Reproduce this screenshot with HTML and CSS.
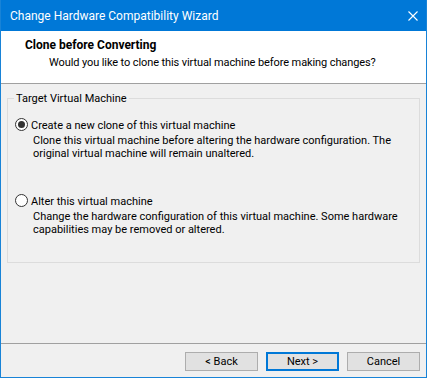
FILE: index.html
```html
<!DOCTYPE html>
<html lang="en">
<head>
    <meta charset="UTF-8">
    <meta name="viewport" content="width=device-width, initial-scale=1.0">
    <title>Change Hardware Compatibility Wizard</title>
    <link rel="stylesheet" href="styles.css">
</head>
<body>

    <div class="window">

        <!-- Title bar -->
        <div class="titlebar">
            <span class="title">Change Hardware Compatibility Wizard</span>
            <svg class="close" width="10" height="10" viewBox="0 0 10 10">
                <path d="M0.5 0.5L9.5 9.5M9.5 0.5L0.5 9.5" stroke="#fff" stroke-width="1.1" fill="none"/>
            </svg>
        </div>

        <!-- Page header -->
        <div class="header">
            <h1>Clone before Converting</h1>
            <p>Would you like to clone this virtual machine before making changes?</p>
        </div>

        <!-- Options -->
        <div class="content">
            <fieldset class="group">
                <legend>Target Virtual Machine</legend>

                <label class="option">
                    <span class="radio checked"></span>
                    <span class="option-text">
                        <span class="option-title">Create a new clone of this virtual machine</span>
                        <span class="option-desc">Clone this virtual machine before altering the hardware configuration. The<br>original virtual machine will remain unaltered.</span>
                    </span>
                </label>

                <label class="option">
                    <span class="radio"></span>
                    <span class="option-text">
                        <span class="option-title">Alter this virtual machine</span>
                        <span class="option-desc">Change the hardware configuration of this virtual machine. Some hardware<br>capabilities may be removed or altered.</span>
                    </span>
                </label>
            </fieldset>
        </div>

        <!-- Buttons -->
        <div class="footer">
            <button>&lt; Back</button>
            <button class="default">Next &gt;</button>
            <button>Cancel</button>
        </div>

    </div>

</body>
</html>
```

FILE: styles.css
```css
/* General reset */
* {
    margin: 0;
    padding: 0;
    box-sizing: border-box;
}

body {
    background-color: #ffffff;
    font-family: Roboto, "Noto Sans", sans-serif;
    font-size: 11px;
    line-height: 13px;
    color: #000;
}

/* Window frame */
.window {
    display: flex;
    flex-direction: column;
    width: 427px;
    height: 378px;
    border: 1px solid #1883d7;
    border-top: none;
    background-color: #f0f0f0;
}

/* Title bar */
.titlebar {
    display: flex;
    align-items: center;
    justify-content: space-between;
    height: 31px;
    padding: 0 8px 0 9px;
    background-color: #0078d7;
    color: #fff;
}

.titlebar .title {
    font-size: 12px;
    line-height: 30px;
    padding-top: 1px;
}

.titlebar .close {
    display: block;
}

/* Header */
.header {
    height: 53px;
    padding: 8px 0 0 24px;
    background-color: #fff;
    border-bottom: 1px solid #a0a0a0;
}

.header h1 {
    font-size: 12px;
    font-weight: bold;
}

.header p {
    margin-top: 4px;
    padding-left: 24px;
    letter-spacing: -0.1px;
}

/* Group box */
.content {
    flex: 1;
    padding: 7px 6px 0;
}

.group {
    display: flex;
    flex-direction: column;
    gap: 34px;
    padding: 12px 6px 26px;
    border: 1px solid #dcdcdc;
}

.group legend {
    padding: 1px 2px 0;
    line-height: 14px;
}

/* Radio options */
.option {
    display: flex;
    align-items: flex-start;
}

.radio {
    flex: none;
    position: relative;
    width: 13px;
    height: 13px;
    margin: 0 3px 0 1px;
    border: 1px solid #333;
    border-radius: 50%;
    background-color: #fff;
}

.radio.checked::after {
    content: "";
    position: absolute;
    top: 2px;
    left: 2px;
    width: 7px;
    height: 7px;
    border-radius: 50%;
    background-color: #333;
}

.option-text {
    display: flex;
    flex-direction: column;
    gap: 2px;
    padding-top: 1px;
    white-space: nowrap;
}

.option-desc {
    padding-left: 2px;
}

/* Footer buttons */
.footer {
    display: flex;
    justify-content: flex-end;
    gap: 8px;
    padding: 8px 6px 6px;
    border-top: 1px solid #a0a0a0;
}

.footer button {
    width: 73px;
    height: 19px;
    border: 1px solid #adadad;
    background-color: #e1e1e1;
    font-family: inherit;
    font-size: 11px;
    color: #000;
}

.footer button.default {
    border: 2px solid #0078d7;
}
```
